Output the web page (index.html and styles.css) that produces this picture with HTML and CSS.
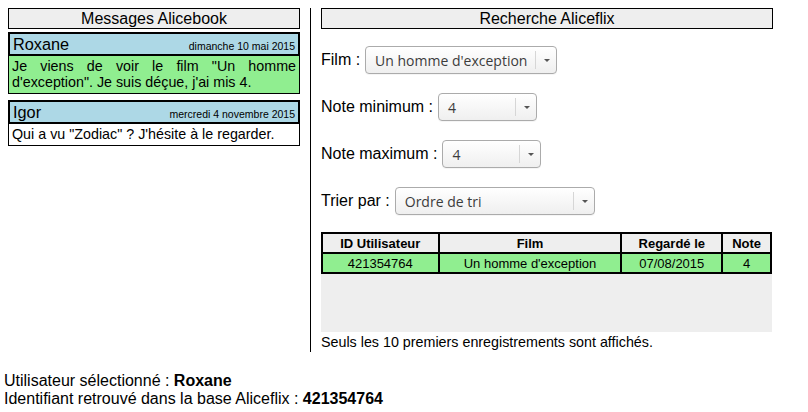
FILE: index.html
```html
<!DOCTYPE html>
<html lang="fr">
<head>
<meta charset="utf-8">
<title>Alicebook / Aliceflix</title>
<link rel="stylesheet" href="styles.css">
</head>
<body>
<div class="page">
  <div class="columns">
    <section class="left">
      <div class="panel-title">Messages Alicebook</div>
      <div class="message">
        <div class="msg-head"><span class="msg-author">Roxane</span><span class="msg-date">dimanche 10 mai 2015</span></div>
        <div class="msg-body selected">Je viens de voir le film "Un homme d'exception". Je suis déçue, j'ai mis 4.</div>
      </div>
      <div class="message">
        <div class="msg-head"><span class="msg-author">Igor</span><span class="msg-date">mercredi 4 novembre 2015</span></div>
        <div class="msg-body">Qui a vu "Zodiac" ? J'hésite à le regarder.</div>
      </div>
    </section>
    <section class="right">
      <div class="panel-title">Recherche Aliceflix</div>
      <div class="field first">
        <span class="label">Film :</span>
        <div class="select w-film"><span class="select-value">Un homme d'exception</span><span class="select-arrow"></span></div>
      </div>
      <div class="field">
        <span class="label">Note minimum :</span>
        <div class="select w-note"><span class="select-value">4</span><span class="select-arrow"></span></div>
      </div>
      <div class="field">
        <span class="label">Note maximum :</span>
        <div class="select w-note"><span class="select-value">4</span><span class="select-arrow"></span></div>
      </div>
      <div class="field">
        <span class="label">Trier par :</span>
        <div class="select w-sort"><span class="select-value">Ordre de tri</span><span class="select-arrow"></span></div>
      </div>
      <div class="results">
        <table class="grid">
          <thead>
            <tr><th class="c-id">ID Utilisateur</th><th class="c-film">Film</th><th class="c-date">Regardé le</th><th class="c-note">Note</th></tr>
          </thead>
          <tbody>
            <tr><td>421354764</td><td>Un homme d'exception</td><td>07/08/2015</td><td>4</td></tr>
          </tbody>
        </table>
        <div class="results-fill"></div>
      </div>
      <div class="note">Seuls les 10 premiers enregistrements sont affichés.</div>
    </section>
  </div>
  <div class="info">
    <div>Utilisateur sélectionné : <b>Roxane</b></div>
    <div>Identifiant retrouvé dans la base Aliceflix : <b>421354764</b></div>
  </div>
</div>
</body>
</html>
```
FILE: styles.css
```css
* { box-sizing: border-box; }
html, body { margin: 0; padding: 0; background: #fff; }
body {
  font-family: "Liberation Sans", Arial, sans-serif;
  font-size: 16px;
  color: #000;
}
.page { padding: 8px 0 0 0; }
.columns { display: flex; align-items: flex-start; padding-left: 8px; }

.left { width: 292px; }
.panel-title {
  background: #eeeeee;
  border: 1px solid #000;
  text-align: center;
  font-size: 16px;
  line-height: 19px;
  height: 21px;
}
.message { margin-top: 3px; }
.message + .message { margin-top: 6px; }
.msg-head {
  display: flex;
  justify-content: space-between;
  align-items: baseline;
  background: #add8e6;
  border: 2px solid #000;
  padding: 0 3px 0 3px;
  height: 24px;
  line-height: 20px;
}
.msg-author { font-size: 16.3px; }
.msg-date { font-size: 10.5px; }
.msg-body {
  border: 1px solid #000;
  border-top: none;
  padding: 2px 3px 3px 3px;
  font-size: 14.3px;
  line-height: 16px;
  text-align: justify;
  background: #fff;
}
.msg-body.selected { background: #90ee90; }

.right {
  margin-left: 10px;
  border-left: 1px solid #000;
  padding-left: 10px;
  width: 463px;
}
.field {
  display: flex;
  align-items: center;
  height: 28px;
  margin-top: 19px;
}
.field.first { margin-top: 17px; }
.label { margin-right: 5px; white-space: nowrap; }
.select {
  display: flex;
  align-items: center;
  height: 28px;
  border: 1px solid #ababab;
  border-radius: 4px;
  background: linear-gradient(#ffffff, #efefef);
  font-family: "Open Sans", "Noto Sans", sans-serif;
  font-size: 14px;
  color: #3c3c3c;
  box-shadow: 0 1px 0 rgba(0,0,0,0.04);
}
.select-value { flex: 1; padding-left: 9px; white-space: nowrap; }
.select-arrow {
  position: relative;
  width: 21px;
  height: 18px;
  border-left: 1px solid #d6d6d6;
}
.select-arrow::after {
  content: "";
  position: absolute;
  left: 8px;
  top: 8px;
  border-left: 3px solid transparent;
  border-right: 3px solid transparent;
  border-top: 3px solid #555;
}
.w-film { width: 192px; }
.w-note { width: 99px; }
.w-sort { width: 200px; }

.results { margin-top: 17px; width: 451px; }
.grid {
  width: 451px;
  border-collapse: collapse;
  font-size: 13px;
  text-align: center;
}
.grid th, .grid td {
  border: 2px solid #000;
  padding: 0;
  height: 20px;
  line-height: 17px;
}
.grid th { background: #eeeeee; font-weight: bold; }
.grid td { background: #90ee90; }
.c-id { width: 117px; }
.c-film { width: 184px; }
.c-date { width: 101px; }
.c-note { width: 49px; }
.results-fill { height: 58px; background: #eeeeee; }
.note { font-size: 14.3px; line-height: 19px; padding-top: 1px; }

.info {
  margin-top: 20px;
  padding-left: 4px;
  font-size: 16px;
  line-height: 18px;
}
.info b { font-weight: bold; }
```
